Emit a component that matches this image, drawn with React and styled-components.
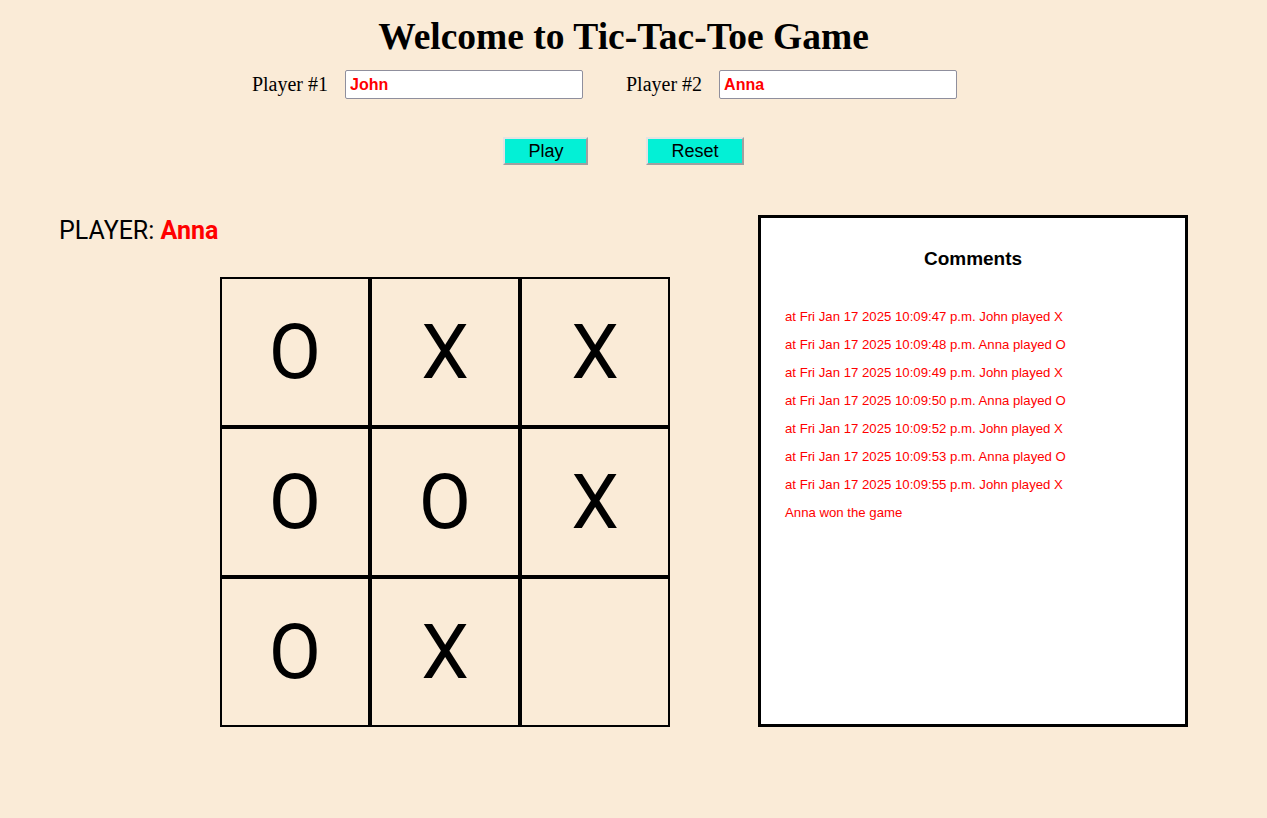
import React from "react";
import styled, { createGlobalStyle } from "styled-components";

const GlobalStyle = createGlobalStyle`
  html, body {
    margin: 0;
    padding: 0;
    background: #faebd7;
  }
  body {
    font-family: "Liberation Serif", "Times New Roman", serif;
    color: #000;
  }
`;

const Page = styled.div`
  width: 1247px;
  min-height: 818px;
  background: #faebd7;
`;

const Header = styled.header`
  display: flex;
  flex-direction: column;
  align-items: center;
`;

const Title = styled.h1`
  margin: 14px 0 0;
  font-family: "Liberation Serif", "Times New Roman", serif;
  font-size: 37.5px;
  font-weight: 700;
  line-height: 46px;
`;

const PlayersRow = styled.div`
  display: flex;
  align-items: center;
  margin-top: 10px;
  padding-right: 38px;
`;

const PlayerField = styled.label`
  display: flex;
  align-items: center;
  gap: 17px;
  font-size: 20px;
  margin-left: ${props => (props.second ? "43px" : "0")};
`;

const NameInput = styled.input`
  box-sizing: border-box;
  width: 238px;
  height: 29px;
  padding: 0 4px;
  border: 1px solid #8f8f9d;
  border-radius: 2px;
  background: #fff;
  color: #ff0000;
  font-family: "Liberation Sans", Arial, sans-serif;
  font-weight: 700;
  font-size: 16px;
  outline: none;
`;

const Buttons = styled.div`
  display: flex;
  gap: 58px;
  margin-top: 38px;
`;

const ActionButton = styled.button`
  height: 28px;
  padding: 0 23px;
  background: #03f0d6;
  border: 2px solid;
  border-color: #e3e3e3 #a0a0a0 #a0a0a0 #e3e3e3;
  font-family: "Liberation Sans", Arial, sans-serif;
  font-size: 18px;
  color: #000;
  cursor: pointer;
`;

const Main = styled.main`
  display: flex;
  align-items: flex-start;
  margin-top: 50px;
  padding-left: 59px;
`;

const GameColumn = styled.section`
  flex: 0 0 699px;
  padding-top: 2px;
`;

const Turn = styled.div`
  font-family: Roboto, "Liberation Sans", sans-serif;
  font-size: 25px;
  line-height: 28px;
`;

const TurnName = styled.span`
  color: #ff0000;
  font-weight: 700;
`;

const Board = styled.div`
  display: grid;
  grid-template-columns: repeat(3, 150px);
  grid-template-rows: repeat(3, 150px);
  margin: 32px 0 0 161px;
  width: 450px;
`;

const Cell = styled.div`
  box-sizing: border-box;
  border: 2px solid #000;
  display: flex;
  align-items: center;
  justify-content: center;
  font-family: Roboto, "Liberation Sans", sans-serif;
  font-size: 76px;
  line-height: 1;
`;

const CommentsBox = styled.aside`
  flex: 0 0 auto;
  box-sizing: border-box;
  width: 430px;
  height: 512px;
  border: 3px solid #000;
  background: #fff;
  padding: 0 24px;
`;

const CommentsTitle = styled.h3`
  margin: 30px 0 33px;
  text-align: center;
  font-family: "Comic Sans MS", "Liberation Sans", sans-serif;
  font-size: 19px;
  font-weight: 700;
`;

const CommentList = styled.ul`
  list-style: none;
  margin: 0;
  padding: 0;
`;

const Comment = styled.li`
  color: #ff0000;
  font-family: "Comic Sans MS", "Liberation Sans", sans-serif;
  font-size: 13.2px;
  line-height: 28px;
  white-space: nowrap;
`;

const board = ["O", "X", "X", "O", "O", "X", "O", "X", ""];

const moves = [
  ["47", "John", "X"],
  ["48", "Anna", "O"],
  ["49", "John", "X"],
  ["50", "Anna", "O"],
  ["52", "John", "X"],
  ["53", "Anna", "O"],
  ["55", "John", "X"],
];

export default function App() {
  return (
    <Page>
      <GlobalStyle />
      <Header>
        <Title>Welcome to Tic-Tac-Toe Game</Title>
        <PlayersRow>
          <PlayerField>
            Player #1
            <NameInput defaultValue="John" />
          </PlayerField>
          <PlayerField second>
            Player #2
            <NameInput defaultValue="Anna" />
          </PlayerField>
        </PlayersRow>
        <Buttons>
          <ActionButton>Play</ActionButton>
          <ActionButton>Reset</ActionButton>
        </Buttons>
      </Header>
      <Main>
        <GameColumn>
          <Turn>
            PLAYER: <TurnName>Anna</TurnName>
          </Turn>
          <Board>
            {board.map((mark, i) => (
              <Cell key={i}>{mark}</Cell>
            ))}
          </Board>
        </GameColumn>
        <CommentsBox>
          <CommentsTitle>Comments</CommentsTitle>
          <CommentList>
            {moves.map(([sec, name, mark]) => (
              <Comment key={sec}>
                at Fri Jan 17 2025 10:09:{sec} p.m. {name} played {mark}
              </Comment>
            ))}
            <Comment>Anna won the game</Comment>
          </CommentList>
        </CommentsBox>
      </Main>
    </Page>
  );
}
